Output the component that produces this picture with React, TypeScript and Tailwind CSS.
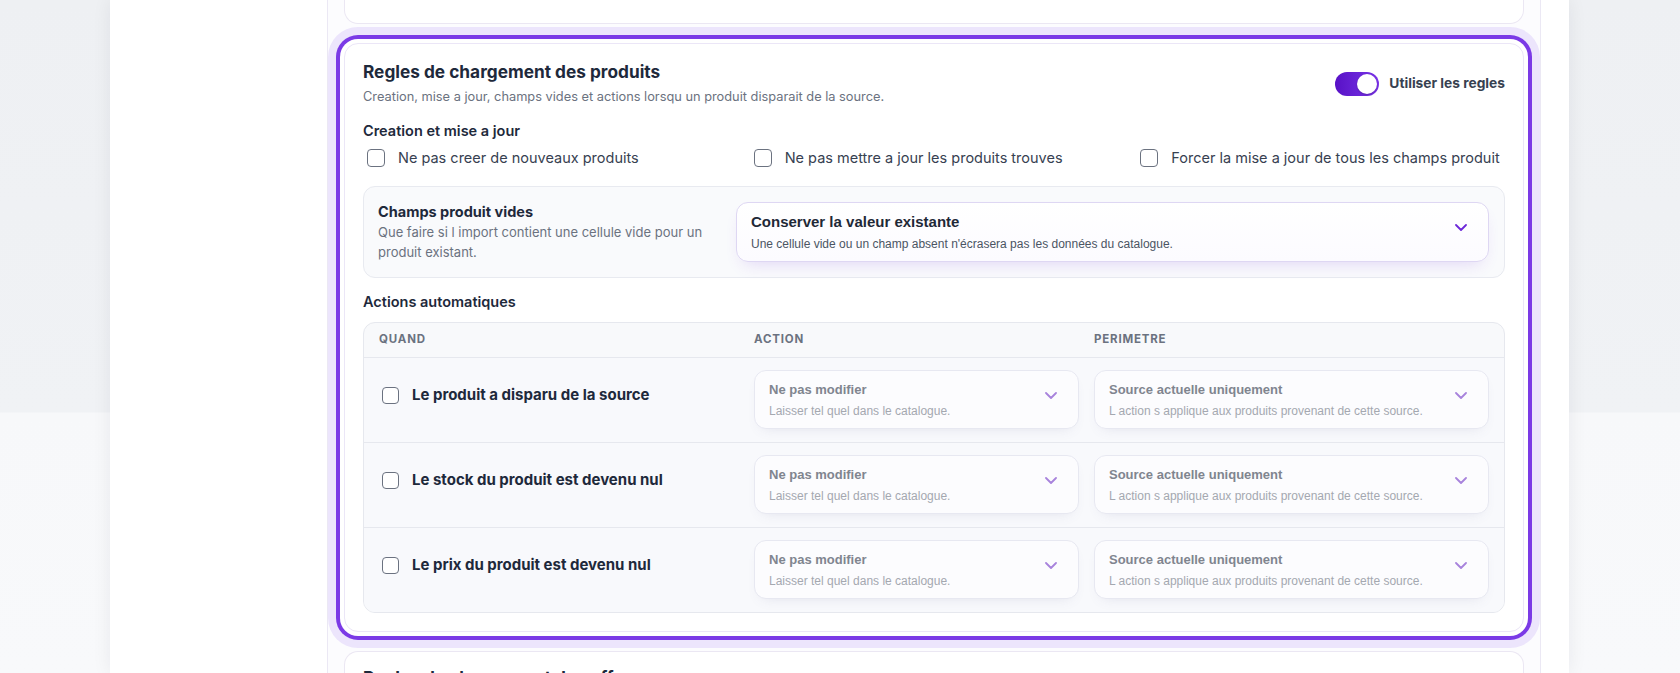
import React from "react";

const Chevron = ({ color }: { color: string }) => (
  <svg width="12" height="7" viewBox="0 0 12 7" fill="none" className="shrink-0">
    <path d="M1 1l5 5 5-5" stroke={color} strokeWidth="1.8" strokeLinecap="round" strokeLinejoin="round" />
  </svg>
);

const Box = ({ size = 18 }: { size?: number }) => (
  <span
    className={
      (size === 18 ? "w-[18px] h-[18px]" : "w-[17px] h-[17px]") +
      " shrink-0 rounded-[4px] border-[1.5px] border-[#6b7280] bg-white"
    }
  />
);

const RowSelect = ({ title, desc }: { title: string; desc: string }) => (
  <div className="flex h-[59px] items-start justify-between rounded-xl border border-[#e7e8f1] bg-[#fcfcfe] pl-[14px] pr-[21px] shadow-[0_6px_14px_-8px_rgba(90,90,140,0.18)]" style={{ fontFamily: '"Liberation Sans", Arial, sans-serif' }}>
    <div className="pt-[10px]">
      <div className="text-[13px] font-bold leading-[18px] text-[#80858f]">{title}</div>
      <div className="mt-[4px] text-[12px] leading-[16px] text-[#a4a8b0]">{desc}</div>
    </div>
    <div className="mt-[21px]">
      <Chevron color="#a883dc" />
    </div>
  </div>
);

const rows = [
  "Le produit a disparu de la source",
  "Le stock du produit est devenu nul",
  "Le prix du produit est devenu nul",
];

export default function App() {
  return (
    <div
      className="flex h-[673px] w-full overflow-hidden bg-[linear-gradient(to_bottom,#eef0f3_0px,#f0f2f5_412px,#f7f8fa_413px,#f8f9fb_673px)]"
      style={{ fontFamily: 'Inter, "Noto Sans", sans-serif' }}
    >
      <div className="w-[110px] shrink-0" />
      <div className="flex w-[1459px] shrink-0 bg-white shadow-[0_0_18px_rgba(15,23,42,0.07)]">
        <div className="w-[217px] shrink-0" />
        <div className="flex w-[1214px] shrink-0 flex-col gap-[19px] border-x border-[#ebe8f4] bg-[#fcfcfe] px-4">
          {/* card above */}
          <div className="h-[24px] shrink-0 rounded-b-[14px] border border-t-0 border-[#ebe7f3] bg-white" />

          {/* selected card */}
          <div className="shrink-0 rounded-[14px] border border-[#ebe6f7] bg-white px-[18px] pb-[18px] pt-4 shadow-[0_0_0_4px_#ffffff,0_0_0_8px_#7b3ae6,0_0_0_16px_#ece5fc]">
            <div className="flex items-center justify-between">
              <div>
                <div className="text-[17.25px] font-bold leading-6 text-[#1e293b]">Regles de chargement des produits</div>
                <div className="mt-[3px] text-[12.8px] leading-5 text-[#6b7280]">
                  Creation, mise a jour, champs vides et actions lorsqu un produit disparait de la source.
                </div>
              </div>
              <div className="flex items-center gap-[10px]">
                <div className="flex h-6 w-11 items-center justify-end rounded-full bg-gradient-to-r from-[#5810c6] to-[#7a32e8] px-[2px]">
                  <span className="h-5 w-5 rounded-full bg-white shadow-[0_1px_2px_rgba(0,0,0,0.2)]" />
                </div>
                <span className="text-[13.75px] font-bold text-[#374151]">Utiliser les regles</span>
              </div>
            </div>

            <div className="mt-[14px] text-[14.5px] font-semibold leading-5 text-[#1e293b]">Creation et mise a jour</div>
            <div className="mt-[5px] grid grid-cols-3 gap-[18px]">
              {[
                "Ne pas creer de nouveaux produits",
                "Ne pas mettre a jour les produits trouves",
                "Forcer la mise a jour de tous les champs produit",
              ].map((t) => (
                <label key={t} className="flex h-6 items-center gap-[13px] pl-1 text-[14.5px] text-[#374151]">
                  <Box />
                  <span className="whitespace-nowrap">{t}</span>
                </label>
              ))}
            </div>

            <div className="mt-4 flex items-center justify-between rounded-xl border border-[#e8eaf0] bg-[#f9fafc] py-[15px] pl-[14px] pr-[15px]">
              <div className="w-[340px]">
                <div className="text-[14.5px] font-bold leading-5 text-[#1e293b]">Champs produit vides</div>
                <div className="text-[13px] leading-5 text-[#6b7280]">
                  Que faire si l import contient une cellule vide pour un produit existant.
                </div>
              </div>
              <div
                className="flex h-[60px] w-[753px] items-start justify-between rounded-xl border border-[#ded7f3] bg-gradient-to-b from-white to-[#fcfbff] pl-[14px] pr-[21px] shadow-[0_8px_18px_-8px_rgba(109,40,217,0.2)]"
                style={{ fontFamily: '"Liberation Sans", Arial, sans-serif' }}
              >
                <div className="pt-[10px]">
                  <div className="text-[15px] font-bold leading-[18px] text-[#1f2937]">Conserver la valeur existante</div>
                  <div className="mt-[5px] text-[12px] leading-[16px] text-[#4b5563]">
                    Une cellule vide ou un champ absent n'écrasera pas les données du catalogue.
                  </div>
                </div>
                <div className="mt-[21px]">
                  <Chevron color="#6d28d9" />
                </div>
              </div>
            </div>

            <div className="mt-[14px] text-[14.5px] font-semibold leading-5 text-[#1e293b]">Actions automatiques</div>
            <div className="mt-[10px] overflow-hidden rounded-xl border border-[#e6e8ee] bg-[#f8f9fb]">
              <div className="grid h-[34px] grid-cols-[360px_325px_1fr] items-center gap-[15px] px-[15px] text-[11.5px] font-bold tracking-[0.07em] text-[#6b7280]">
                <span>QUAND</span>
                <span>ACTION</span>
                <span>PERIMETRE</span>
              </div>
              {rows.map((r) => (
                <div key={r} className="grid grid-cols-[360px_325px_1fr] items-start gap-[15px] border-t border-[#e6e8ee] bg-[#f8f9fc] px-[15px] pb-[13px] pt-[12px]">
                  <div className="mt-[13px] flex h-6 items-center gap-[13px] pl-[3px]">
                    <Box size={17} />
                    <span className="whitespace-nowrap text-[15px] font-bold text-[#1e293b]">{r}</span>
                  </div>
                  <RowSelect title="Ne pas modifier" desc="Laisser tel quel dans le catalogue." />
                  <RowSelect title="Source actuelle uniquement" desc="L action s applique aux produits provenant de cette source." />
                </div>
              ))}
            </div>
          </div>

          {/* next card */}
          <div className="h-[60px] shrink-0 rounded-t-[14px] border border-b-0 border-[#ebe7f3] bg-white px-[18px] pt-[14px]">
            <div className="text-[17.25px] font-bold leading-6 text-[#1e293b]">Regles de chargement des offres</div>
          </div>
        </div>
        <div className="flex-1" />
      </div>
    </div>
  );
}
